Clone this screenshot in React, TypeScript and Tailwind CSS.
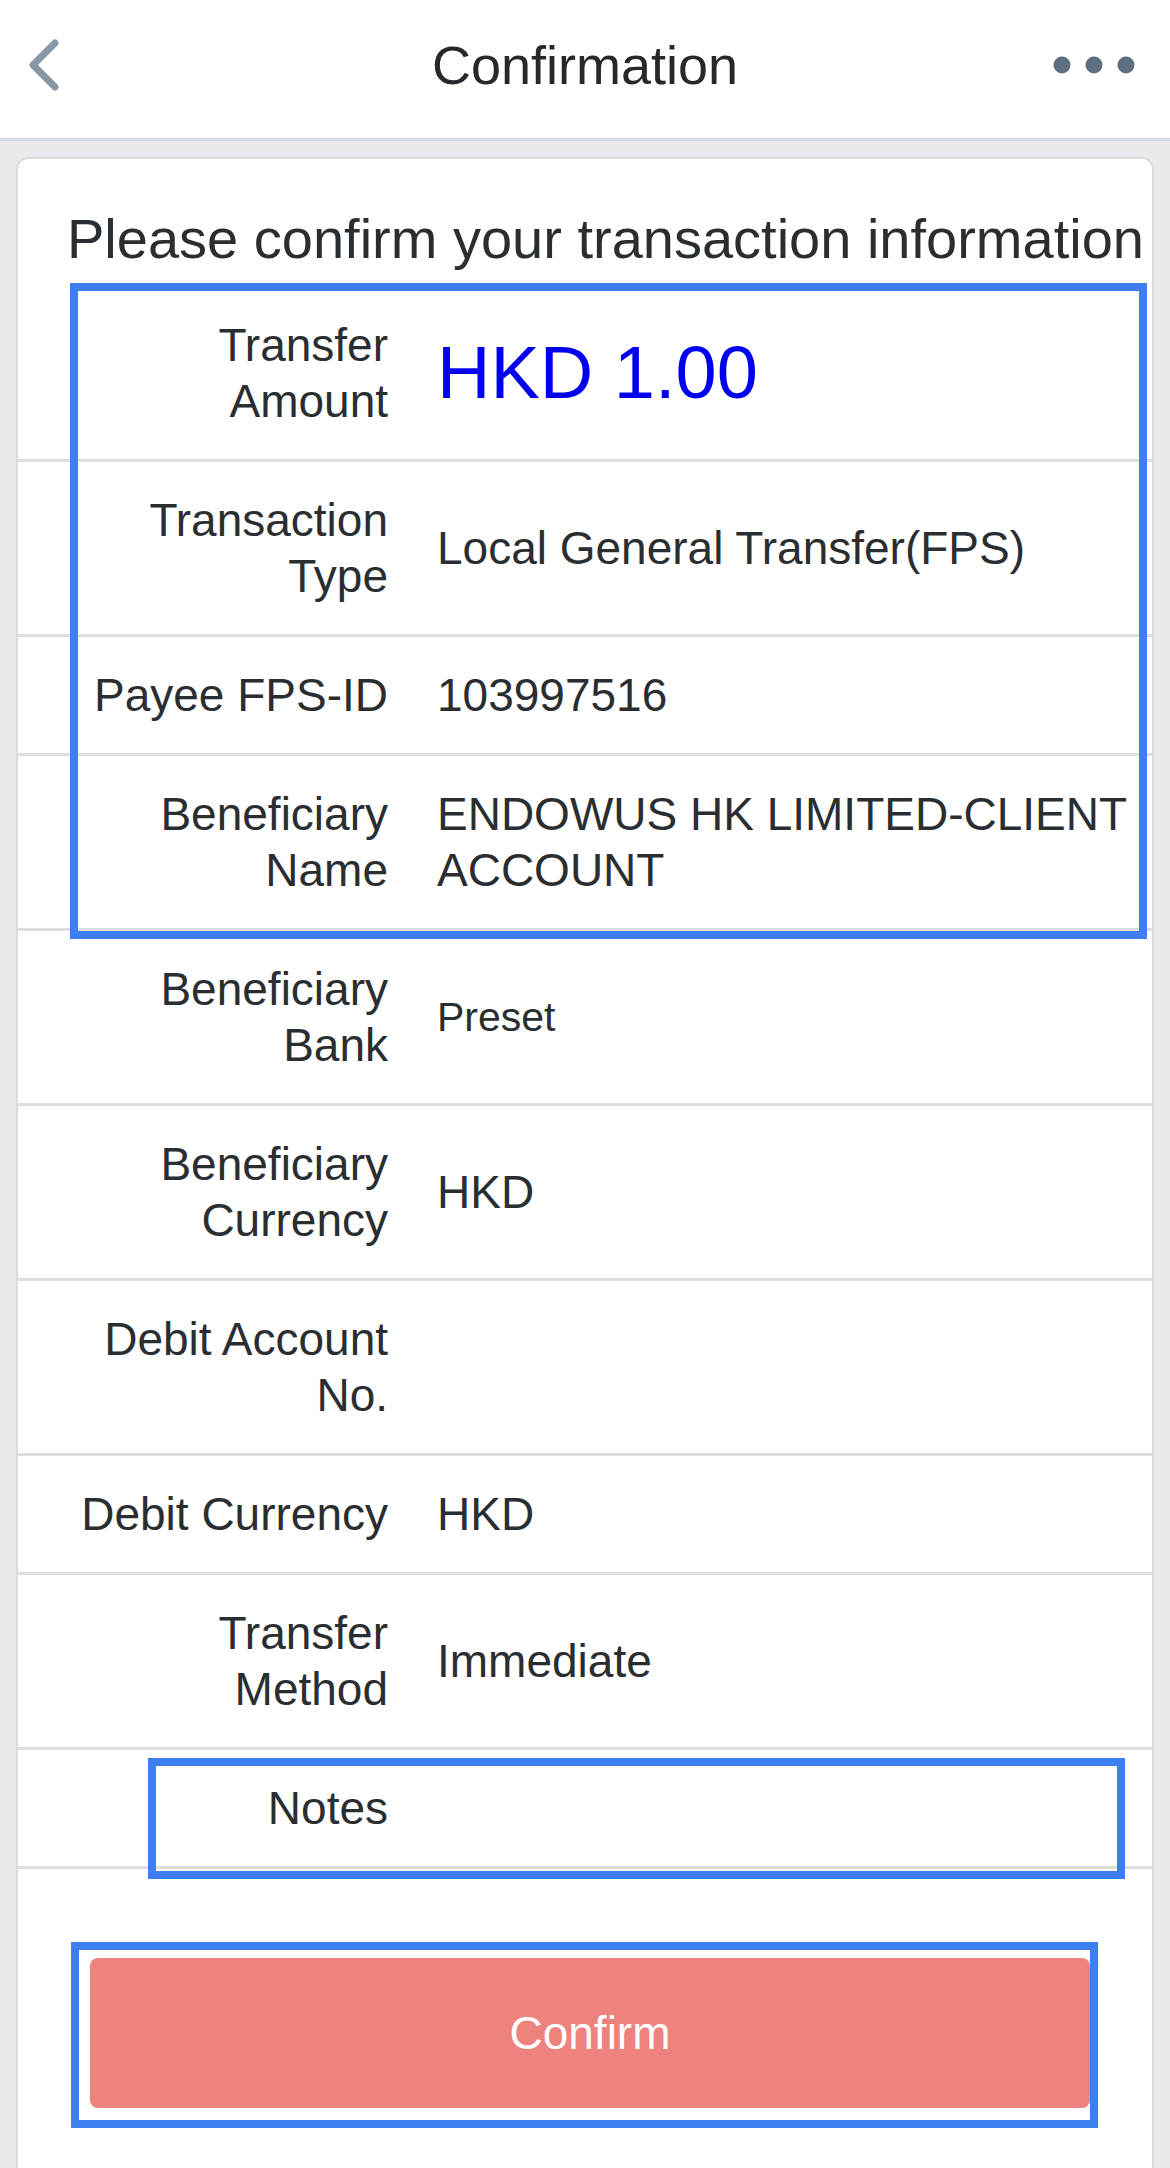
import React from "react";

type Row = { label: string; value?: string; kind?: "amount" | "small" };

const rows: Row[] = [
  { label: "Transfer Amount", value: "HKD 1.00", kind: "amount" },
  { label: "Transaction Type", value: "Local General Transfer(FPS)" },
  { label: "Payee FPS-ID", value: "103997516" },
  { label: "Beneficiary Name", value: "ENDOWUS HK LIMITED-CLIENT ACCOUNT" },
  { label: "Beneficiary Bank", value: "Preset", kind: "small" },
  { label: "Beneficiary Currency", value: "HKD" },
  { label: "Debit Account No.", value: "" },
  { label: "Debit Currency", value: "HKD" },
  { label: "Transfer Method", value: "Immediate" },
  { label: "Notes", value: "" },
];

function ValueCell({ row }: { row: Row }) {
  if (row.kind === "amount") {
    return (
      <div className="self-center text-[74px] leading-[80px] text-[#0000ee]">
        {row.value}
      </div>
    );
  }
  if (row.kind === "small") {
    return <div className="self-center text-[41px] leading-[56px]">{row.value}</div>;
  }
  return <div className="self-center text-[46px] leading-[56px]">{row.value}</div>;
}

export default function App() {
  return (
    <div className="relative w-[1170px] h-[2168px] overflow-hidden bg-[#e9e9ee] font-['Liberation_Sans',Arial,sans-serif] text-[#2b2e31]">
      {/* Header */}
      <div className="h-[141px] pb-[8px] bg-white border-b-[3px] border-[#d5dde2] grid grid-cols-[1fr_auto_1fr] items-center">
        <div className="flex items-center pl-[25px]">
          <svg width="40" height="56" viewBox="0 0 40 56" fill="none">
            <path
              d="M30 6 L8 28 L30 50"
              stroke="#8797a6"
              strokeWidth="7"
              strokeLinecap="round"
              strokeLinejoin="round"
            />
          </svg>
        </div>
        <div className="text-[54px] leading-none text-[#26292c]">Confirmation</div>
        <div className="flex justify-end pr-[34px]">
          <svg width="84" height="20" viewBox="0 0 84 20">
            <circle cx="10" cy="10" r="8.5" fill="#5e6f7f" />
            <circle cx="42" cy="10" r="8.5" fill="#5e6f7f" />
            <circle cx="74" cy="10" r="8.5" fill="#5e6f7f" />
          </svg>
        </div>
      </div>

      {/* Main */}
      <div className="pt-[16px] px-[16px]">
        <div className="bg-white border-2 border-[#dcdcdc] rounded-[12px] min-h-[2100px]">
          <div className="pt-[48px] pl-[49px] mb-[16px] text-[56px] leading-[64px] whitespace-nowrap">
            Please confirm your transaction information
          </div>
          <div className="flex flex-col">
            {rows.map((r) => (
              <div
                key={r.label}
                className="grid grid-cols-[323px_1fr] gap-x-[49px] pl-[47px] pr-[10px] py-[30px] border-b-[3px] border-[#dedede]"
              >
                <div className="text-right text-[46px] leading-[56px]">{r.label}</div>
                <ValueCell row={r} />
              </div>
            ))}
          </div>
          <div className="pt-[89px] pl-[72px]">
            <button className="w-[1000px] h-[150px] rounded-[8px] bg-[#ee827e] text-white text-[46px] leading-none flex items-center justify-center">
              Confirm
            </button>
          </div>
        </div>
      </div>

      {/* Highlight overlays */}
      <div className="absolute left-[70px] top-[283px] w-[1077px] h-[656px] border-[8px] border-[#3d7ef0] pointer-events-none" />
      <div className="absolute left-[148px] top-[1758px] w-[977px] h-[121px] border-[8px] border-[#3d7ef0] pointer-events-none" />
      <div className="absolute left-[71px] top-[1942px] w-[1027px] h-[186px] border-[8px] border-[#3d7ef0] pointer-events-none" />
    </div>
  );
}
